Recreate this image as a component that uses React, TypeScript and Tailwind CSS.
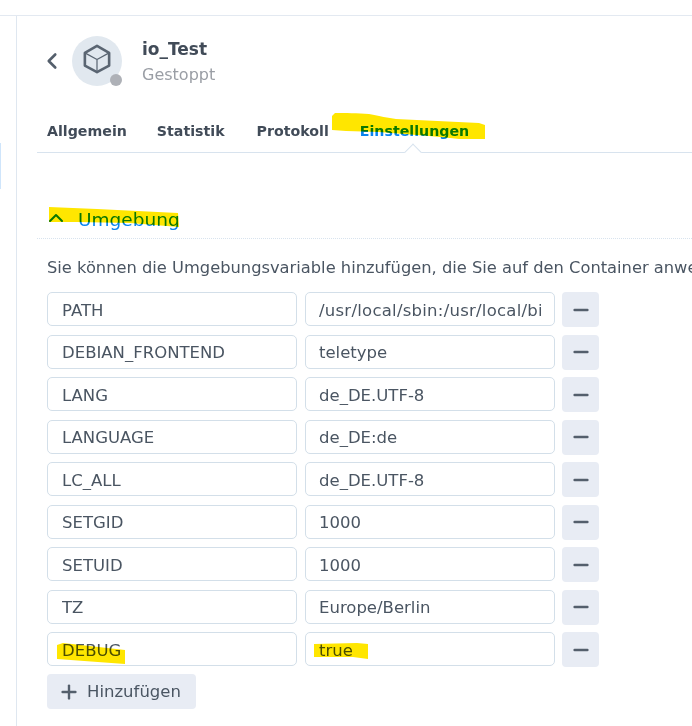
import { ChevronLeft, ChevronUp, Minus, Plus } from "lucide-react";

const envVars = [
  ["PATH", "/usr/local/sbin:/usr/local/bin:/usr/sbin"],
  ["DEBIAN_FRONTEND", "teletype"],
  ["LANG", "de_DE.UTF-8"],
  ["LANGUAGE", "de_DE:de"],
  ["LC_ALL", "de_DE.UTF-8"],
  ["SETGID", "1000"],
  ["SETUID", "1000"],
  ["TZ", "Europe/Berlin"],
  ["DEBUG", "true"],
];

// yellow marker strokes scribbled over the screenshot
function Highlights() {
  return (
    <svg className="absolute left-0 top-0 w-[692px] h-[726px] mix-blend-multiply pointer-events-none" viewBox="0 0 692 726" fill="#ffe600">
      <path d="M332 116 L335 113 C345 113 358 113 369 114 C380 116 388 118 396 119 L479 123 L485 125 L485 139 L459 139 C450 138 440 137 429 136 L379 132 L346 131 L332 130 Z" />
      <path d="M49 207 L97 209 L178 213 L179 227 L130 223 L77 222 L49 222 Z" />
      <path d="M57 645 L63 643 L125 650 L125 664 L57 659 Z" />
      <path d="M314 644 L357 643 L368 644 L368 659 L353 657 L314 657 Z" />
    </svg>
  );
}

export default function App() {
  return (
    <div className="relative w-[692px] h-[726px] overflow-hidden bg-white text-[16.5px] text-[#4a5562] font-['DejaVu_Sans',sans-serif]">
      <div className="h-4 border-b border-[#e3e9f1]" />
      <div className="flex h-[710px]">
        <div className="w-[17px] shrink-0 border-r border-[#dfe7f0] pt-[127px]">
          <div className="w-px h-[46px] bg-[#cfe5fb]" />
        </div>
        <div className="flex-1 min-w-0 pl-5">
          <div className="h-[83px] pl-[2px] pt-5 flex items-start">
            <div className="h-[50px] flex items-center">
              <ChevronLeft className="w-[26px] h-[26px] text-[#545f6c]" strokeWidth={2.4} />
            </div>
            <div className="relative w-[50px] h-[50px] ml-[7px] rounded-full bg-[#e1e8ef] flex items-center justify-center">
              <svg className="mb-[4px]" width="28" height="30" viewBox="0 0 30 32" fill="none" stroke="#5a6572" strokeLinejoin="round">
                <path d="M15 2 28 9.500V23L15 30 2 23V9.500z" strokeWidth="2.800" />
                <path d="M3 10 15 16.500 27 10M15 16.500V29" strokeWidth="1.300" />
              </svg>
              <span className="absolute right-0 bottom-0 w-3 h-3 rounded-full bg-[#aeb1b7]" />
            </div>
            <div className="ml-5 pt-px">
              <div className="text-[17px] leading-[25px] font-bold text-[#414b58]">io_Test</div>
              <div className="text-[16px] leading-[25px] text-[#9a9ea5]">Gestoppt</div>
            </div>
          </div>

          <div className="relative h-[54px] border-b border-[#d8e3ee] pl-[10px] pt-[22px] flex text-[14.2px] leading-[20px] font-bold text-[#414b58]">
            <span>Allgemein</span>
            <span className="ml-[30px]">Statistik</span>
            <span className="ml-[32px]">Protokoll</span>
            <span className="ml-[31px] text-[#0a84ef]">Einstellungen</span>
            <span className="absolute left-[370px] -bottom-[6px] w-[12px] h-[12px] rotate-45 bg-white border-l border-t border-[#d8e3ee]" />
          </div>

          <div className="h-[86px] border-b border-dotted border-[#d8e3ee] pl-[7px] pt-[49px] flex items-center gap-[10px] text-[#0a84ef] text-[18.500px] leading-[24px]">
            <ChevronUp className="w-[24px] h-[24px] text-[#0a84ef] -mt-[4px]" strokeWidth={2} />
            <span>Umgebung</span>
          </div>

          <div className="pl-[10px] pt-[19px]">
            <div className="h-[20px] text-[16.3px] leading-[20px] whitespace-nowrap">
              Sie können die Umgebungsvariable hinzufügen, die Sie auf den Container anwenden möchten.
            </div>
            <div className="mt-[14px] flex flex-col gap-[7.500px]">
              {envVars.map(([key, value]) => (
                <div key={key} className="flex h-[35px] items-start">
                  <input readOnly value={key} className="w-[250px] h-[34px] rounded-[5px] border border-[#d3dfe9] pl-[14px] pr-[14px] pt-[2px] outline-none" />
                  <input readOnly value={value} className={`ml-2 w-[250px] h-[34px] rounded-[5px] border border-[#d3dfe9] pl-[13px] pr-[13px] pt-[2px] outline-none ${key === "PATH" ? "tracking-[0.25px]" : ""}`} />
                  <button className="ml-[7px] w-[37px] h-[35px] rounded-[4px] bg-[#e8ecf4] flex items-center justify-center">
                    <Minus className="w-[22px] h-[22px] text-[#545f6c]" strokeWidth={2.6} />
                  </button>
                </div>
              ))}
            </div>
            <button className="mt-[7px] w-[149px] h-[35px] rounded-[4px] bg-[#e8ecf4] flex items-center pl-[11px] gap-[7px]">
              <Plus className="w-[22px] h-[22px] text-[#545f6c]" strokeWidth={2.6} />
              <span className="pt-[2px]">Hinzufügen</span>
            </button>
          </div>
        </div>
      </div>
      <Highlights />
    </div>
  );
}
